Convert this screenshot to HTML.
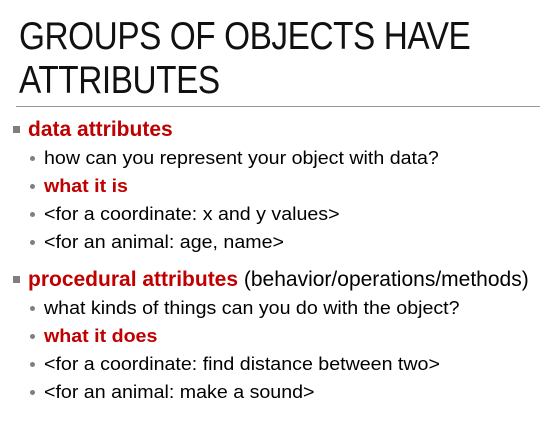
<!DOCTYPE html><html><head><style>
body{margin:0;width:552px;height:421px;background:#fff;overflow:hidden;position:relative;font-family:"Liberation Sans",sans-serif;color:#000}
.t{position:absolute;left:19px;font-size:39px;line-height:46px;letter-spacing:-0.5px;white-space:nowrap;transform:scaleX(0.855);transform-origin:0 0;color:#111}
.hr{position:absolute;left:16px;top:106px;width:524px;height:1px;background:#999}
.l{position:absolute;white-space:nowrap;line-height:24px}
.m{left:28px;font-size:21px}
.s{left:44px;font-size:18px;transform:scaleX(1.09);transform-origin:0 0}
.r{color:#c00000;font-weight:bold}
.sq{position:absolute;left:13px;width:7px;height:7px;background:#7f7f7f}
.d{position:absolute;left:30px;width:5px;height:5px;border-radius:50%;background:#7f7f7f}
</style></head><body>
<div class="t" style="top:14px">GROUPS OF OBJECTS HAVE</div>
<div class="t" style="top:58px">ATTRIBUTES</div>
<div class="hr"></div>
<div class="sq" style="top:126px"></div><div class="l m r" style="top:118px">data attributes</div>
<div class="d" style="top:156px"></div><div class="l s" style="top:146px">how can you represent your object with data?</div>
<div class="d" style="top:184px"></div><div class="l s r" style="top:174px">what it is</div>
<div class="d" style="top:212px"></div><div class="l s" style="top:202px">&lt;for a coordinate: x and y values&gt;</div>
<div class="d" style="top:240px"></div><div class="l s" style="top:230px">&lt;for an animal: age, name&gt;</div>
<div class="sq" style="top:276px"></div><div class="l m" style="top:268px"><span class="r">procedural attributes</span> (behavior/operations/methods)</div>
<div class="d" style="top:306px"></div><div class="l s" style="top:296px">what kinds of things can you do with the object?</div>
<div class="d" style="top:334px"></div><div class="l s r" style="top:324px">what it does</div>
<div class="d" style="top:362px"></div><div class="l s" style="top:352px">&lt;for a coordinate: find distance between two&gt;</div>
<div class="d" style="top:390px"></div><div class="l s" style="top:380px">&lt;for an animal: make a sound&gt;</div>
</body></html>
